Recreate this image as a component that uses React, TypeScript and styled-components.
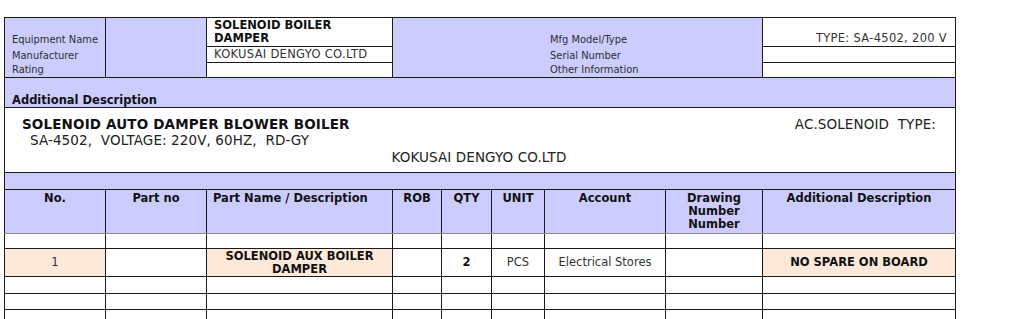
import React from "react";
import styled, { createGlobalStyle, css } from "styled-components";

const LAVENDER = "#ccccff";
const PEACH = "#fde9d9";
const LINE = "#1a1a1a";

const GlobalStyle = createGlobalStyle`
  html, body {
    margin: 0;
    padding: 0;
    background: #ffffff;
  }
  body {
    font-family: "DejaVu Sans", Verdana, sans-serif;
    font-size: 11.5px;
    color: #333333;
  }
`;

const Page = styled.div`
  padding: 17px 0 0 4px;
`;

const Sheet = styled.table`
  border-collapse: collapse;
  table-layout: fixed;
  width: 951px;
  line-height: 13px;
  border-left: 1px solid ${LINE};
  border-right: 1px solid ${LINE};
  border-top: 1px solid ${LINE};

  td,
  th {
    padding: 0;
  }
`;

/* ---------- equipment block ---------- */

const LabelCell = styled.td<{ $last?: boolean; $indent?: number }>`
  background: ${LAVENDER};
  font-family: "DejaVu Sans Condensed", "DejaVu Sans", sans-serif;
  font-size: 11px;
  color: #2e2e2e;
  vertical-align: bottom;
  padding: 0 4px 1px ${(p) => p.$indent ?? 7}px !important;
  white-space: nowrap;
  ${(p) =>
    p.$last &&
    css`
      border-bottom: 1px solid ${LINE};
    `}
`;

const FillCell = styled.td`
  background: ${LAVENDER};
  border-left: 1px solid ${LINE};
  border-right: 1px solid ${LINE};
  border-bottom: 1px solid ${LINE};
`;

const ValueCell = styled.td<{ $bold?: boolean; $right?: boolean; $top?: boolean }>`
  background: #ffffff;
  border: 1px solid ${LINE};
  color: ${(p) => (p.$bold ? "#111" : "#333")};
  font-weight: ${(p) => (p.$bold ? 700 : 400)};
  letter-spacing: ${(p) => (p.$bold ? 0 : 0.3)}px;
  text-align: ${(p) => (p.$right ? "right" : "left")};
  vertical-align: ${(p) => (p.$top ? "top" : "bottom")};
  padding: ${(p) => (p.$right ? "0 8px 1px 4px" : "1px 4px 1px 7px")} !important;
  white-space: nowrap;
`;

/* ---------- bands and description ---------- */

const BandCell = styled.td<{ $height: number }>`
  background: ${LAVENDER};
  height: ${(p) => p.$height}px;
  vertical-align: bottom;
  padding: 0 0 0 7px !important;
  font-weight: 700;
  color: #111;
  border-bottom: 1px solid ${LINE};
`;

const DescCell = styled.td`
  height: 56px;
  vertical-align: top;
  border-bottom: 1px solid ${LINE};
  padding: 8px 19px 0 17px !important;
  color: #111;
`;

const DescTop = styled.div`
  display: flex;
  justify-content: space-between;
  align-items: baseline;
`;

const DescTitle = styled.div`
  font-size: 13.5px;
  font-weight: 700;
  letter-spacing: 0.15px;
  line-height: 16px;
`;

const DescPlain = styled.div<{ $center?: boolean; $indent?: number }>`
  font-size: 13.5px;
  line-height: 16px;
  color: #222;
  letter-spacing: 0.1px;
  padding-left: ${(p) => p.$indent ?? 0}px;
  text-align: ${(p) => (p.$center ? "center" : "left")};
`;

/* ---------- parts list ---------- */

const HeadCell = styled.th<{ $align?: "center" | "left" }>`
  background: ${LAVENDER};
  height: 41px;
  vertical-align: top;
  text-align: ${(p) => p.$align ?? "center"};
  font-weight: 700;
  color: #111;
  padding: 2px 6px 0 !important;
  border-left: 1px solid ${LINE};
  border-right: 1px solid ${LINE};
  border-bottom: 1px solid #888;
`;

const ItemRow = styled.tr<{ $height: number }>`
  height: ${(p) => p.$height}px;
`;

const ItemCell = styled.td<{ $tone?: "peach"; $bold?: boolean }>`
  background: ${(p) => (p.$tone === "peach" ? PEACH : "#ffffff")};
  border-left: 1px solid ${LINE};
  border-right: 1px solid ${LINE};
  border-bottom: 1px solid ${LINE};
  text-align: center;
  vertical-align: middle;
  font-weight: ${(p) => (p.$bold ? 700 : 400)};
  color: ${(p) => (p.$bold ? "#111" : "#333")};
  padding: 0 6px !important;
`;

const colWidths = [101, 101, 186, 49, 50, 53, 121, 97, 193];

const heads: { label: React.ReactNode; align?: "left" }[] = [
  { label: "No." },
  { label: "Part no" },
  { label: "Part Name / Description", align: "left" },
  { label: "ROB" },
  { label: "QTY" },
  { label: "UNIT" },
  { label: "Account" },
  {
    label: (
      <>
        Drawing
        <br />
        Number
        <br />
        Number
      </>
    ),
  },
  { label: "Additional Description" },
];

type Part = {
  no: string;
  partNo: string;
  name: React.ReactNode;
  rob: string;
  qty: string;
  unit: string;
  account: string;
  drawing: string;
  remark: string;
};

const parts: (Part | null)[] = [
  null,
  {
    no: "1",
    partNo: "",
    name: (
      <>
        SOLENOID AUX BOILER
        <br />
        DAMPER
      </>
    ),
    rob: "",
    qty: "2",
    unit: "PCS",
    account: "Electrical Stores",
    drawing: "",
    remark: "NO SPARE ON BOARD",
  },
  null,
  null,
  null,
];

const rowHeights = [15, 28, 17, 16, 16];

const App: React.FC = () => {
  return (
    <Page>
      <GlobalStyle />
      <Sheet>
        <colgroup>
          {colWidths.map((w, i) => (
            <col key={i} style={{ width: w }} />
          ))}
        </colgroup>
        <tbody>
          <tr style={{ height: 27 }}>
            <LabelCell>Equipment Name</LabelCell>
            <FillCell rowSpan={3} />
            <ValueCell $bold $top>
              SOLENOID BOILER
              <br />
              DAMPER
            </ValueCell>
            <LabelCell colSpan={5} $indent={157}>
              Mfg Model/Type
            </LabelCell>
            <ValueCell $right>TYPE: SA-4502, 200 V</ValueCell>
          </tr>
          <tr style={{ height: 15 }}>
            <LabelCell>Manufacturer</LabelCell>
            <ValueCell>KOKUSAI DENGYO CO.LTD</ValueCell>
            <LabelCell colSpan={5} $indent={157}>
              Serial Number
            </LabelCell>
            <ValueCell />
          </tr>
          <tr style={{ height: 15 }}>
            <LabelCell $last>Rating</LabelCell>
            <ValueCell />
            <LabelCell colSpan={5} $indent={157} $last>
              Other Information
            </LabelCell>
            <ValueCell />
          </tr>

          <tr>
            <BandCell colSpan={9} $height={29}>
              Additional Description
            </BandCell>
          </tr>
          <tr>
            <DescCell colSpan={9}>
              <DescTop>
                <DescTitle>SOLENOID AUTO DAMPER BLOWER BOILER</DescTitle>
                <DescPlain>AC.SOLENOID&nbsp; TYPE:</DescPlain>
              </DescTop>
              <DescPlain $indent={8}>
                SA-4502,&nbsp; VOLTAGE: 220V, 60HZ,&nbsp; RD-GY
              </DescPlain>
              <DescPlain $center style={{ marginTop: 1 }}>
                KOKUSAI DENGYO CO.LTD
              </DescPlain>
            </DescCell>
          </tr>
          <tr>
            <BandCell colSpan={9} $height={16} />
          </tr>

          <tr>
            {heads.map((h, i) => (
              <HeadCell key={i} $align={h.align}>
                {h.label}
              </HeadCell>
            ))}
          </tr>

          {parts.map((p, i) => (
            <ItemRow key={i} $height={rowHeights[i]}>
              <ItemCell $tone={p ? "peach" : undefined}>{p?.no}</ItemCell>
              <ItemCell>{p?.partNo}</ItemCell>
              <ItemCell $tone={p ? "peach" : undefined} $bold>
                {p?.name}
              </ItemCell>
              <ItemCell>{p?.rob}</ItemCell>
              <ItemCell $bold>{p?.qty}</ItemCell>
              <ItemCell>{p?.unit}</ItemCell>
              <ItemCell>{p?.account}</ItemCell>
              <ItemCell>{p?.drawing}</ItemCell>
              <ItemCell $tone={p ? "peach" : undefined} $bold>
                {p?.remark}
              </ItemCell>
            </ItemRow>
          ))}
        </tbody>
      </Sheet>
    </Page>
  );
};

export default App;
